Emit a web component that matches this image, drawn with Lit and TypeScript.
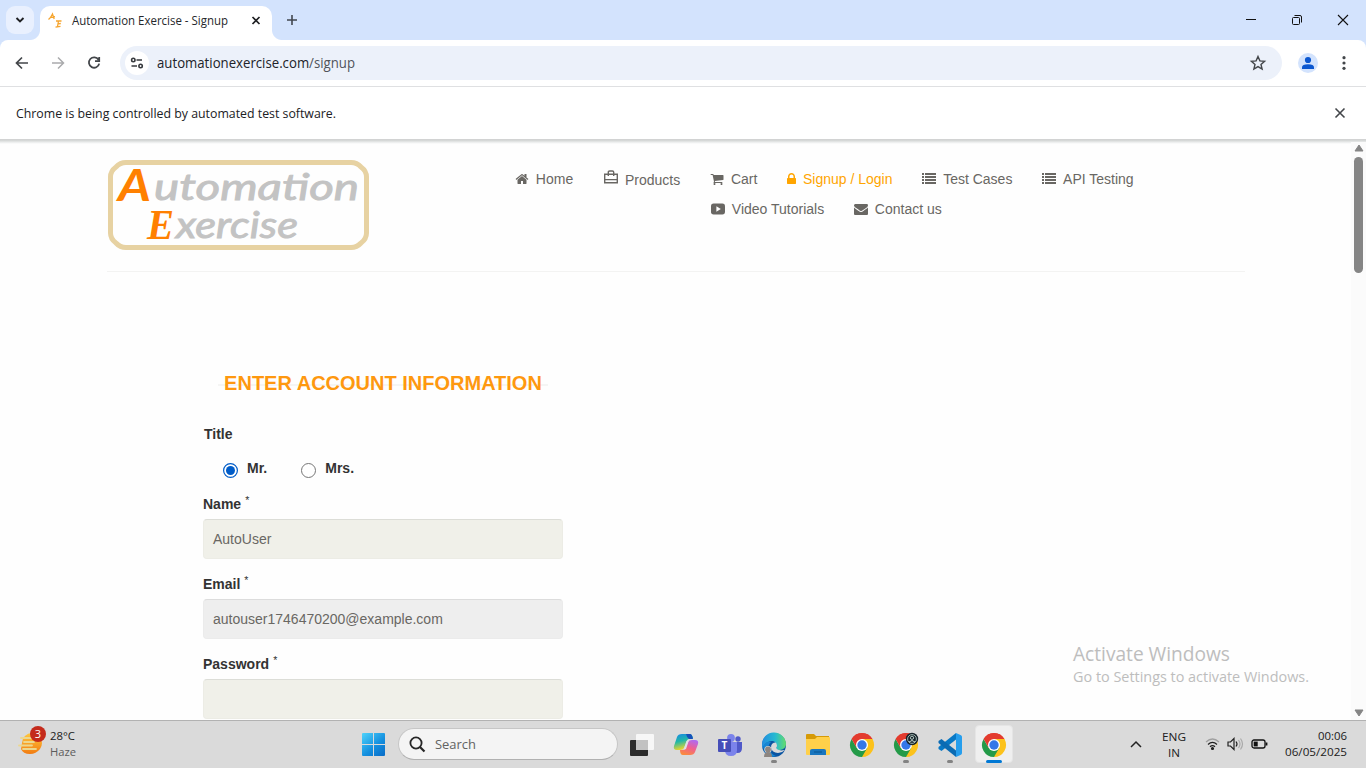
import { LitElement, html, svg, css } from "lit";
import { customElement } from "lit/decorators.js";

/** A run of text set to an exact advance width. */
const label = (
  text: string,
  width: number,
  size: number,
  color: string,
  height = 20,
  anchorY = 15,
) => html`<svg class="label" width=${width} height=${height}>
  <text x="0" y=${anchorY} font-size=${size} fill=${color} textLength=${width} lengthAdjust="spacingAndGlyphs">${text}</text>
</svg>`;

const fa = (d: string) => html`<svg class="fa" width="14" height="14" viewBox="0 0 1792 1792"><path fill="currentColor" d=${d} /></svg>`;

const home = fa("M1472 992v480q0 26-19 45t-45 19h-384v-384h-256v384h-384q-26 0-45-19t-19-45v-480q0-1 .5-3t.5-3l575-474 575 474q1 2 1 6zm223-69l-62 74q-8 9-21 11h-3q-13 0-21-7l-692-577-692 577q-12 8-24 7-13-2-21-11l-62-74q-8-10-7-23.5t11-21.5l719-599q32-26 76-26t76 26l244 204v-195q0-14 9-23t23-9h192q14 0 23 9t9 23v408l219 182q10 8 11 21.5t-7 23.5z");
const cart = fa("M704 1536q0 52-38 90t-90 38-90-38-38-90 38-90 90-38 90 38 38 90zm896 0q0 52-38 90t-90 38-90-38-38-90 38-90 90-38 90 38 38 90zm128-1088v512q0 24-16.5 42.5t-40.5 21.5l-1044 122q13 60 13 70 0 16-24 64h920q26 0 45 19t19 45-19 45-45 19h-1024q-26 0-45-19t-19-45q0-11 8-31.5t16-36 21.5-40 15.5-29.5l-177-823h-204q-26 0-45-19t-19-45 19-45 45-19h256q16 0 28.5 6.5t19.5 15.5 13 24.5 8 26 5.5 29.5 4.5 26h1201q26 0 45 19t19 45z");
const lock = html`<svg class="fa" width="9" height="14" viewBox="320 0 1152 1792"><path fill="currentColor" d="M640 768h512v-192q0-106-75-181t-181-75-181 75-75 181v192zm832 96v576q0 40-28 68t-68 28h-960q-40 0-68-28t-28-68v-576q0-40 28-68t68-28h32v-192q0-184 132-316t316-132 316 132 132 316v192h32q40 0 68 28t28 68z" /></svg>`;
const mail = fa("M1792 710v794q0 66-47 113t-113 47h-1472q-66 0-113-47t-47-113v-794q44 49 101 87 362 246 497 345 57 42 92.5 65.5t94.5 48 110 24.5h2q51 0 110-24.5t94.5-48 92.5-65.5q170-123 498-345 57-39 100-87zm0-294q0 79-49 151t-122 123q-376 261-468 325-10 7-42.5 31t-54 38.5-52 32.5-57.5 27-50 9h-2q-23 0-50-9t-57.5-27-52-32.5-54-38.5-42.5-31q-91-64-262-182.5t-205-142.5q-62-42-117-115.5t-55-136.5q0-78 41.5-130t118.5-52h1472q65 0 112.5 47t47.5 113z");
const list = html`<svg class="fa" width="14" height="14" viewBox="0 0 14 14" fill="currentColor" shape-rendering="crispEdges"><path d="M0 1h2v2H0zM0 4h2v2H0zM0 7h2v2H0zM0 10h2v2H0zM3 1h11v2H3zM3 4h11v2H3zM3 7h11v2H3zM3 10h11v2H3z" /></svg>`;
const video = html`<svg class="fa" width="14" height="14" viewBox="0 0 14 14"><rect y="1.6" width="14" height="10.8" rx="2.6" fill="currentColor" /><path fill="#fefefe" d="M5.4 4.2v5.6L9.8 7z" /></svg>`;
const bag = html`<svg class="bag" width="16" height="16" viewBox="0 0 16 16" fill="none" stroke="currentColor" stroke-width="1.4"><path d="M1.7 4.3h12.6v8.4H1.7zM1.7 9.6h12.6M5.3 6V2.2Q5.3 1 6.6 1h2.800q1.300 0 1.300 1.200V6" /></svg>`;

const chromeLogo = (badge = false) => html`<svg width="24" height="24" viewBox="0 0 24 24">
  <path fill="#e33b2e" d="M12 12 1.6 6A12 12 0 0 1 22.4 6z" />
  <path fill="#fcc21b" d="M12 12 22.4 6A12 12 0 0 1 12 24z" />
  <path fill="#fcc21b" d="M12 6h10.4l.8 2L17 14z" />
  <path fill="#249a48" d="M1.6 6A12 12 0 0 0 12 24l5.2-9L12 12 6.8 15z" />
  <path fill="#e33b2e" d="M1.6 6 6.8 15 8 8l4-2h10.4A12 12 0 0 0 1.6 6z" />
  <circle cx="12" cy="12" r="6" fill="#fff" /><circle cx="12" cy="12" r="4.7" fill="#3577e8" />
  ${badge
    ? svg`<circle cx="18" cy="6" r="6.2" fill="#17242a"/><circle cx="18" cy="6" r="4.4" fill="none" stroke="#a9c0bb" stroke-width=".9"/><circle cx="18" cy="4.8" r="1.6" fill="none" stroke="#c4d8d2" stroke-width=".9"/><path d="M15 9q3-3 6 0" fill="none" stroke="#c4d8d2"/>`
    : ""}
</svg>`;

@customElement("browser-chrome")
class BrowserChrome extends LitElement {
  static styles = css`
    :host { display: block; font-family: "Open Sans", "Noto Sans", sans-serif; background: #d3e3fd; }
    svg { display: block; flex: none; overflow: visible; }
    .tabs { display: flex; height: 40px; box-sizing: border-box; padding: 6px 0 0 6px; align-items: flex-start; }
    .search { width: 28px; height: 28px; border-radius: 9px; background: #e9f0fe; display: grid; place-items: center; }
    .tab { position: relative; width: 232px; height: 34px; box-sizing: border-box; margin-left: 6px; padding: 0 10px 4px 8px; background: #fff; border-radius: 10px 10px 0 0; display: flex; align-items: center; }
    .tab::before, .tab::after { content: ""; position: absolute; bottom: 0; width: 10px; height: 10px; }
    .tab::before { left: -10px; background: radial-gradient(circle at 0 0, transparent 9.5px, #fff 10.5px); }
    .tab::after { right: -10px; background: radial-gradient(circle at 100% 0, transparent 9.5px, #fff 10.5px); }
    .tab .label { margin-left: 9px; }
    .x { margin-left: auto; }
    .plus { margin: 8px 0 0 14px; }
    .win { margin-left: auto; display: flex; gap: 34px; padding: 8px 17px 0 0; }
    .bar { height: 46px; box-sizing: border-box; background: #fff; border-radius: 8px 8px 0 0; display: flex; align-items: center; padding: 0 14px; }
    .nav { display: flex; gap: 20px; }
    .url { flex: 1; height: 34px; margin-left: 18px; border-radius: 17px; background: #ecf1fa; display: flex; align-items: center; padding: 0 16px 0 5px; }
    .site { width: 24px; height: 24px; border-radius: 50%; background: #fff; display: grid; place-items: center; margin-right: 8px; }
    .star { margin-left: auto; }
    .user { margin: 0 18px 0 16px; }
    .info { height: 54px; box-sizing: border-box; border-top: 1px solid #dfe0e2; border-bottom: 1px solid #d2d3d3; background: #fff; display: flex; align-items: center; justify-content: space-between; padding: 0 20px 0 16px; }
  `;
  render() {
    return html`
      <div class="tabs">
        <div class="search"><svg width="10" height="8" viewBox="0 0 10 8"><path d="M1.5 2 5 5.5 8.500 2" fill="none" stroke="#202124" stroke-width="1.9" /></svg></div>
        <div class="tab">
          <svg width="15" height="16" viewBox="0 0 15 16" fill="none" stroke="#f6a52f" stroke-width="1.3"><path d="M.5 6.500Q3 4.500 4.500 1L6.200 6M2 4.500l5-.8M8 8h5.500M10.500 8 9.500 13.700M7.500 14.200l5-.9M9.800 10.800l3-.3" /></svg>
          ${label("Automation Exercise - Signup", 156, 12.3, "#25272b", 16, 12)}
          <svg class="x" width="12" height="12" viewBox="0 0 12 12"><path d="m2.500 2 7 7m0-7-7 7" stroke="#1f2023" stroke-width="1.700" /></svg>
        </div>
        <svg class="plus" width="12" height="12" viewBox="0 0 12 12"><path d="M1 6h10M6 1v10" stroke="#42474f" stroke-width="1.600" /></svg>
        <div class="win">
          <svg width="12" height="12" viewBox="0 0 12 12"><path d="M1 5.500h10" stroke="#111" /></svg>
          <svg width="12" height="12" viewBox="0 0 12 12" fill="none" stroke="#111"><rect x="1.500" y="3.500" width="7" height="7" rx="1" /><path d="M3.500 1.500H9Q10.500 1.500 10.500 3v5.500" /></svg>
          <svg width="12" height="12" viewBox="0 0 12 12"><path d="m1 1 10 10M11 1 1 11" stroke="#111" stroke-width="1.100" /></svg>
        </div>
      </div>
      <div class="bar">
        <div class="nav">
          <svg width="16" height="16" viewBox="0 0 16 16" fill="none" stroke="#43464a" stroke-width="1.700"><path d="M14 8H3M8 2.500 2.500 8 8 13.500" /></svg>
          <svg width="16" height="16" viewBox="0 0 16 16" fill="none" stroke="#aaabad" stroke-width="1.500"><path d="M2 8h11M8 2.500 13.500 8 8 13.500" /></svg>
          <svg width="16" height="16" viewBox="0 0 16 16" fill="none" stroke="#43464a" stroke-width="1.800"><path d="M12.500 4.700A5.200 5.200 0 1 0 13.200 8.600M13.200 2v4.200H9" /></svg>
        </div>
        <div class="url">
          <div class="site"><svg width="14" height="14" viewBox="0 0 14 14" fill="none" stroke="#373a3e" stroke-width="1.600"><circle cx="3.300" cy="4" r="1.700" /><path d="M6.500 4H12M1.500 10H7" /><circle cx="10.600" cy="10" r="1.700" /></svg></div>
          <svg width="198" height="20"><text y="15" font-size="13.6" fill="#202328" textLength="198" lengthAdjust="spacingAndGlyphs">automationexercise.com<tspan fill="#50545a">/signup</tspan></text></svg>
          <svg class="star" width="16" height="16" viewBox="0 0 16 16"><path d="m8 1.500 1.900 4.400 4.700.4L11 9.500l1.100 4.600L8 11.600l-4.100 2.500L5 9.500 1.400 6.300l4.700-.4z" fill="none" stroke="#43464a" stroke-width="1.400" /></svg>
        </div>
        <svg class="user" width="20" height="20" viewBox="0 0 20 20"><circle cx="10" cy="10" r="10" fill="#d3e3fd" /><circle cx="10" cy="7" r="3.100" fill="#0b57d0" /><path d="M4 16v-1.700Q4 11.200 10 11.200t6 3.100V16z" fill="#0b57d0" /></svg>
        <svg width="16" height="16" viewBox="0 0 16 16" fill="#43464a"><circle cx="8" cy="2.700" r="1.600" /><circle cx="8" cy="8" r="1.600" /><circle cx="8" cy="13.300" r="1.600" /></svg>
      </div>
      <div class="info">
        ${label("Chrome is being controlled by automated test software.", 320, 13.1, "#202124", 20, 15)}
        <svg width="12" height="12" viewBox="0 0 12 12"><path d="m1.500 1.500 9 9m0-9-9 9" stroke="#43464a" stroke-width="1.600" /></svg>
      </div>
    `;
  }
}

@customElement("signup-page")
class SignupPage extends LitElement {
  static styles = css`
    :host { display: flex; background: linear-gradient(#d0d3d2, #f4f5f5 3px, #fefefe 4px); overflow: hidden; position: relative; font: 14px/20px "Liberation Sans", Arial, sans-serif; color: #696763; }
    svg { display: block; flex: none; overflow: visible; }
    .content { flex: 1; min-width: 0; }
    header { display: flex; height: 132px; box-sizing: border-box; margin: 0 106px 0 107px; border-bottom: 1px solid #f3f3f2; padding: 19px 0 0 1px; }
    .menu { margin: 10px 0 0 146px; }
    .row { display: flex; gap: 29.800px; height: 30px; }
    .row.second { padding-left: 196px; }
    .item { display: flex; align-items: flex-start; white-space: nowrap; }
    .fa { margin: 3px 6.850px 0 0; }
    .bag { margin: 1px 6px 0 0; }
    .item.low span { padding-top: 1px; }
    .item.on { color: #ffa500; }
    .form { margin: 101px 0 0 203px; width: 360px; color: #333; font-weight: 700; }
    .heading { display: flex; width: 330px; margin-left: 15px; justify-content: center; background: linear-gradient(#f5f5f4, #f5f5f4) 0 11px / 100% 2px no-repeat; }
    h2 { margin: 0; font-size: 20px; line-height: 20px; color: #fe980f; white-space: nowrap; }
    .title { margin: 31px 0 0 1px; }
    .radios { display: flex; gap: 34px; padding: 14px 0 0 20px; height: 50px; box-sizing: border-box; }
    .radios div { display: flex; gap: 9px; }
    .radios svg { margin-top: 5px; }
    .field { height: 80px; }
    .caption { height: 25px; display: flex; }
    .caption sup { font-size: 10.5px; font-weight: 400; line-height: 14px; margin: -1px 0 0 4px; }
    .input { height: 40px; box-sizing: border-box; border: 1px solid #ecece5; border-top-color: #dcddd7; border-radius: 4px; background: #f0f0e9; color: #696763; font-weight: 400; padding: 9px; }
    .input.off { background: #eee; border-color: #ebebeb; border-top-color: #dcdcdc; }
    .scroll { width: 15px; background: #fbfbfb; display: flex; flex-direction: column; align-items: center; justify-content: space-between; padding: 4px 0 3px; box-sizing: border-box; margin-top: 2px; }
    .scroll svg:first-child { margin-top: -2px; }
    .thumb { width: 9px; height: 116px; border-radius: 5px; background: #858585; margin: 5px 0 auto; }
    .notice { position: absolute; left: 1073px; top: 500px; font-family: "Open Sans", sans-serif; }
  `;
  render() {
    const item = (icon: unknown, text: string, cls = "") => html`<div class="item ${cls}">${icon}<span>${text}</span></div>`;
    const field = (name: string, value: string, off = false) => html`<div class="field">
      <div class="caption">${name}<sup>*</sup></div>
      <div class="input ${off ? "off" : ""}">${value}</div>
    </div>`;
    return html`
      <div class="content">
        <header>
          <svg width="261" height="92" viewBox="0 0 261 92" font-family="Lato, sans-serif" font-style="italic" font-weight="400">
            <path d="M18 3.500H243Q249 3.500 253 8Q258.500 12 258.500 18V74Q258.500 80 253 84Q249 88.500 243 88.500H18Q12 88.500 8 84Q2.500 80 2.500 74V18Q2.500 12 8 8Q12 3.500 18 3.500z" fill="none" stroke="#e7d2a2" stroke-width="5" />
            <text y="41" font-size="36" fill="#c3c3c3" stroke="#c3c3c3" stroke-width=".9" x="46" textLength="205" lengthAdjust="spacingAndGlyphs">utomation</text>
            <text y="42" font-size="43" fill="#ff8000" x="10" textLength="33" lengthAdjust="spacingAndGlyphs" font-weight="700">A</text>
            <text y="79" font-size="36" fill="#c3c3c3" stroke="#c3c3c3" stroke-width=".9" x="68" textLength="122" lengthAdjust="spacingAndGlyphs">xercise</text>
            <text y="80" font-size="43" fill="#ff8000" x="39" textLength="27" lengthAdjust="spacingAndGlyphs" font-family="Liberation Serif" font-weight="700">E</text>
          </svg>
          <div class="menu">
            <div class="row">
              ${item(home, "Home")} ${item(bag, "Products", "low")} ${item(cart, "Cart")}
              ${item(lock, "Signup / Login", "on")} ${item(list, "Test Cases")} ${item(list, "API Testing")}
            </div>
            <div class="row second">${item(video, "Video Tutorials")} ${item(mail, "Contact us")}</div>
          </div>
        </header>
        <div class="form">
          <div class="heading"><h2>ENTER ACCOUNT INFORMATION</h2></div>
          <div class="title">Title</div>
          <div class="radios">
            <div><svg width="15" height="15" viewBox="0 0 15 15"><circle cx="7.500" cy="7.500" r="6.900" fill="#fff" stroke="#005cc8" stroke-width="1.200" /><circle cx="7.500" cy="7.500" r="4.500" fill="#005cc8" /></svg>Mr.</div>
            <div><svg width="15" height="15" viewBox="0 0 15 15"><circle cx="7.500" cy="7.500" r="7" fill="#fff" stroke="#767676" /></svg>Mrs.</div>
          </div>
          ${field("Name", "AutoUser")} ${field("Email", "autouser1746470200@example.com", true)} ${field("Password", "")}
        </div>
      </div>
      <div class="scroll">
        <svg width="10" height="8" viewBox="0 0 10 8"><path d="M5 1 9 7H1z" fill="#858585" stroke="#858585" stroke-linejoin="round" /></svg>
        <div class="thumb"></div>
        <svg width="10" height="8" viewBox="0 0 10 8"><path d="M5 7 9 1H1z" fill="#858585" stroke="#858585" stroke-linejoin="round" /></svg>
      </div>
      <div class="notice">
        ${label("Activate Windows", 157, 19.5, "#bdbdbd", 26, 21)}
        ${label("Go to Settings to activate Windows.", 236, 14.2, "#bdbdbd", 20, 16)}
      </div>
    `;
  }
}

@customElement("task-bar")
class TaskBar extends LitElement {
  static styles = css`
    :host { display: flex; box-sizing: border-box; border-top: 1px solid #b2b2b2; background: #dadada; font-family: "Open Sans", "Noto Sans", sans-serif; }
    svg { display: block; flex: none; overflow: visible; }
    .weather { display: flex; width: 351px; box-sizing: border-box; padding: 5px 0 0 18px; gap: 4px; }
    .cell { position: relative; width: 44px; display: grid; place-items: center; }
    .search { display: flex; align-items: center; gap: 9px; box-sizing: border-box; width: 220px; height: 32px; margin: 7px 2px 0 3px; padding-left: 10px; border: 1px solid #c6c6c6; border-bottom-color: #b1b1b1; border-radius: 16px; background: #f4f4f4; }
    .run::after, .active::after { content: ""; position: absolute; bottom: 5px; left: 19px; width: 6px; height: 3px; border-radius: 2px; background: #838383; }
    .active::before { content: ""; position: absolute; left: 3px; top: 4px; width: 38px; height: 38px; border-radius: 4px; background: #efefef; box-sizing: border-box; border: 1px solid #e5e5e5; }
    .active svg { position: relative; }
    .active::after { left: 14px; width: 16px; background: #0078d4; }
    .tray { margin-left: auto; display: flex; align-items: center; padding-right: 19px; }
    .lang { margin: 0 19px 0 20px; display: flex; flex-direction: column; align-items: center; }
    .icons { display: flex; gap: 7.500px; align-items: center; margin-right: 17px; }
    .icons svg { margin-top: -2px; }
    .clock { display: flex; flex-direction: column; align-items: flex-end; }
  `;
  render() {
    return html`
      <div class="weather">
        <svg width="28" height="30" viewBox="0 0 28 30">
          <defs><linearGradient id="sun" x2="0" y2="1"><stop stop-color="#ffc83d" /><stop offset="1" stop-color="#f27c12" /></linearGradient></defs>
          <path d="M4 17a10 10 0 0 1 20 0q0 3-2 6-4 5-10 5-7 0-9-5z" fill="url(#sun)" />
          <path d="M3 12h10M6 16h10M1 19.500h13M5 23h13" stroke="#ecd78f" stroke-width="1.800" stroke-linecap="round" />
          <circle cx="20" cy="8" r="8" fill="#c42b1c" /><text x="20" y="12" fill="#fff" font-size="11" text-anchor="middle">3</text>
        </svg>
        <div>${label("28°C", 25, 11.3, "#202020", 16, 14)}${label("Haze", 26, 11.3, "#5c5c5c", 16, 14)}</div>
      </div>
      <div class="cell"><svg width="23" height="23" viewBox="0 0 23 23"><defs><linearGradient id="w" gradientUnits="userSpaceOnUse" x2="20" y2="23"><stop stop-color="#4fd3fb" /><stop offset=".6" stop-color="#1490df" /><stop offset="1" stop-color="#0a70ca" /></linearGradient></defs><path fill="url(#w)" d="M1 0h10v11H0V1q0-1 1-1zM12 0h10q1 0 1 1v10H12zM0 12h11v11H1q-1 0-1-1zM12 12h11v10q0 1-1 1H12z" /></svg></div>
      <div class="search">
        <svg width="17" height="17" viewBox="0 0 17 17" fill="none" stroke="#262626" stroke-width="1.800"><circle cx="7" cy="7" r="5.600" /><path d="m11 11 4.500 4.500" stroke-width="2.200" /></svg>
        ${label("Search", 41, 13.2, "#626262", 20, 15)}
      </div>
      <div class="cell"><svg width="24" height="24" viewBox="0 0 24 24"><rect y="7" width="18" height="16" rx="1" fill="#2b2b2b" /><rect x="6" y="1" width="18" height="16" rx="1" fill="#fafafa" opacity=".9" /><path d="M6 7h12v10H6z" fill="#c2c2c2" /></svg></div>
      <div class="cell"><svg width="24" height="24" viewBox="0 0 24 24">
        <defs><linearGradient id="c1" x2=".3" y2="1"><stop stop-color="#1686e8" /><stop offset=".5" stop-color="#22b8a6" /><stop offset="1" stop-color="#eed52b" /></linearGradient><linearGradient id="c2" x1=".7" x2=".3" y2="1"><stop stop-color="#b06af0" /><stop offset=".5" stop-color="#f0608f" /><stop offset="1" stop-color="#fb8b3c" /></linearGradient></defs>
        <path fill="url(#c1)" d="M8 1h8q2 0 3 4l-4 1q-2 0-3 4l-2 5q-1 2-4 2H3q-4 0-3-4L3 4q1-3 5-3z" />
        <path fill="#1650ba" d="M12 1h4q2 0 3 5h-4q-2-1-3-5z" />
        <path fill="url(#c2)" d="M16 22H9q-3 0-3-5h3q2 0 3-3l2-5q1-2 4-2h3q4 0 3 4l-3 8q-1 3-5 3z" />
        <path fill="#dfe0e8" d="m12.500 8 2.500-1-3 9-2.500 1z" /></svg></div>
      <div class="cell"><svg width="24" height="24" viewBox="0 0 24 24"><circle cx="20" cy="6" r="2.700" fill="#5059c9" /><path d="M15 9h9v6q0 5-4.500 5T15 16z" fill="#5059c9" /><circle cx="13" cy="5" r="3.900" fill="#7b83eb" /><path d="M7 9h12v8q0 6-6 6t-6-6z" fill="#7b83eb" /><rect y="6" width="13" height="13" rx="1" fill="#464eb8" /><text x="6.500" y="16" text-anchor="middle" font-size="10" font-weight="700" fill="#fff">T</text></svg></div>
      <div class="cell run"><svg width="24" height="24" viewBox="0 0 24 24"><defs><linearGradient id="e" x2="1"><stop stop-color="#238de0" /><stop offset=".55" stop-color="#27bad1" /><stop offset="1" stop-color="#65dd69" /></linearGradient></defs><circle cx="12" cy="12" r="12" fill="#0b55a2" /><path fill="url(#e)" d="M0 12A12 12 0 0 1 24 11q0 5-6 6-4 0-4-2 2-5-3-7Q5 7 0 15z" /><path fill="#1686d4" d="M1 14q2-6 8-5-4 3-1 8 1 4 6 6Q4 26 1 14z" /><path fill="#dadada" d="M14 9.500q-5 0-5 5 1 5 7 5.500 4 0 7-3-7 1.500-9-2 2-2 0-5.500z" /><circle cx="6" cy="16.500" r="3.600" fill="#dadada" /><circle cx="6" cy="16.500" r="2.900" fill="#8c8580" /><path d="M2 24q0-5 4-5t4 5z" fill="#8c8580" /></svg></div>
      <div class="cell"><svg width="24" height="22" viewBox="0 0 24 22"><path fill="#d69a07" d="M0 1q0-1 1-1h7l2 2h13v6H0z" /><path fill="#ffd04a" d="M0 5h9l2-2h12q1 0 1 1v16q0 1-1 1H1q-1 0-1-1z" /><path fill="#1976bf" d="M4 21v-4q0-2 2-2h12q2 0 2 2v4z" /><path d="M8 18h8" stroke="#0b5b9a" stroke-width="1.200" /></svg></div>
      <div class="cell">${chromeLogo()}</div>
      <div class="cell run">${chromeLogo(true)}</div>
      <div class="cell run"><svg width="24" height="24" viewBox="0 0 24 24"><path fill="#0878c5" d="M18 0v6.500L3.500 18 .5 16v-2z" /><path fill="#0b6bb3" d="m3.500 6 14.500 11.500V24L.5 10V8z" /><path fill="#269eed" d="m18 0 5 2.200Q24 2.700 24 4v16q0 1.300-1 1.800L18 24z" /></svg></div>
      <div class="cell active">${chromeLogo()}</div>
      <div class="tray">
        <svg width="12" height="8" viewBox="0 0 12 8"><path d="m1 6 5-5 5 5" fill="none" stroke="#222" stroke-width="1.500" /></svg>
        <div class="lang">${label("ENG", 24, 11.4, "#202020", 16, 12)}${label("IN", 12, 11.4, "#202020", 16, 12)}</div>
        <div class="icons">
          <svg width="15" height="14" viewBox="0 0 15 14" fill="none" stroke="#222" stroke-width="1.200"><path d="M1 5q6.500-6 13 0" stroke="#a0a0a0" /><path d="M3 7.500q4.500-4.200 9 0M5 9.800q2.500-2.400 5 0" /><circle cx="7.500" cy="11.500" r="1" fill="#222" /></svg>
          <svg width="16" height="14" viewBox="0 0 16 14" fill="none" stroke="#222" stroke-width="1.200"><path d="M0 5h2.500L6 1.500v11L2.500 9H0zM8 4.500q2 2.500 0 5" /><path d="M10.500 3q3 4 0 8M12.500 1.500q4 5.500 0 11" stroke="#aaa" /></svg>
          <svg width="17" height="12" viewBox="0 0 17 12"><rect x="1" y="2" width="13" height="8" rx="2" fill="none" stroke="#111" stroke-width="1.300" /><rect x="2.700" y="3.600" width="4" height="4.800" fill="#111" /><path d="M15.500 4.500v3" stroke="#111" stroke-width="1.800" /></svg>
        </div>
        <div class="clock">${label("00:06", 29, 11.3, "#202020", 16, 11)}${label("06/05/2025", 62, 11.3, "#202020", 16, 11)}</div>
      </div>
    `;
  }
}

@customElement("app-root")
class AppRoot extends LitElement {
  static styles = css`
    :host { display: flex; flex-direction: column; width: 1366px; height: 768px; overflow: hidden; }
    browser-chrome { height: 140px; flex: none; }
    signup-page { flex: 1; min-height: 0; }
    task-bar { height: 48px; flex: none; }
  `;
  render() {
    return html`<browser-chrome></browser-chrome><signup-page></signup-page><task-bar></task-bar>`;
  }
}
